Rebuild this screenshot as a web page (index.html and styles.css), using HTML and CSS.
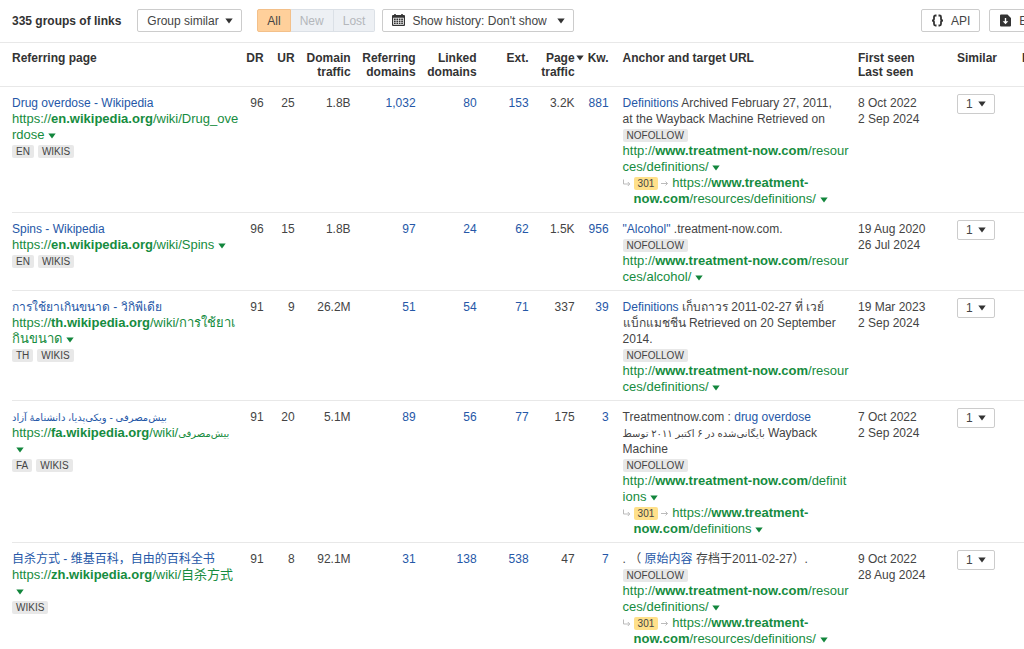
FILE: index.html
```html
<!DOCTYPE html>
<html lang="en">
<head>
<meta charset="utf-8">
<title>Backlinks</title>
<link rel="stylesheet" href="styles.css">
</head>
<body>
<svg class="sprite" aria-hidden="true">
  <symbol id="caret" viewBox="0 0 8 6"><path d="M0.3 0.5h7.4L4 5.5z" fill="currentColor"/></symbol>
  <symbol id="turn" viewBox="0 0 8 8"><path d="M0.5 0.5v4.5h6M4.8 3l2 2-2 2" fill="none" stroke="currentColor"/></symbol>
  <symbol id="arrow" viewBox="0 0 8 8"><path d="M0 4.5h6.5M4.5 2.5l2 2-2 2" fill="none" stroke="currentColor"/></symbol>
</svg>
<main class="page">
  <header class="toolbar">
    <h1 class="count">335 groups of links</h1>
    <div class="select group">
      <select aria-label="Grouping"><option>Group similar</option></select>
      <svg class="mark"><use href="#caret"/></svg>
    </div>
    <div class="segments" role="group" aria-label="Link status">
      <button class="segment active" type="button">All</button>
      <button class="segment" type="button" disabled>New</button>
      <button class="segment" type="button" disabled>Lost</button>
    </div>
    <div class="select history">
      <svg class="icon" viewBox="0 0 13 13"><path fill="currentColor" fill-rule="evenodd" d="M2.200 0h1.600v1h5.400V0h1.600v1H12a1 1 0 0 1 1 1v9a1 1 0 0 1-1 1H1a1 1 0 0 1-1-1V2a1 1 0 0 1 1-1h1.200zM1.200 3.800v7h10.600v-7z"/><path d="M2 5.300h9M2 7.300h9M2 9.300h9" stroke="currentColor" stroke-width="1.500" stroke-dasharray="1.700 .7"/></svg>
      <select aria-label="History"><option>Show history: Don't show</option></select>
      <svg class="mark"><use href="#caret"/></svg>
    </div>
    <div class="actions">
      <button class="button" type="button"><svg class="icon" viewBox="0 0 13 13"><path fill="none" stroke="currentColor" stroke-width="1.800" d="M5.500 1.500H4.500Q3 1.500 3 3V5Q3 6.500 1 6.500Q3 6.500 3 8v2Q3 11.500 4.500 11.500h1M7.500 1.500h1Q10 1.500 10 3V5Q10 6.500 12 6.500Q10 6.500 10 8v2Q10 11.500 8.500 11.500H7.500"/></svg>API</button>
      <button class="button" type="button"><svg class="icon" viewBox="0 0 13 13"><path fill="currentColor" fill-rule="evenodd" d="M2 .5h6.500L12 4v7.500a1 1 0 0 1-1 1H2a1 1 0 0 1-1-1v-10a1 1 0 0 1 1-1zM5.800 4v3.200H3.700l2.800 3 2.800-3H7.200V4z"/></svg>Export</button>
    </div>
  </header>

  <table class="links">
    <colgroup>
      <col class="col-page"><col class="col-dr"><col class="col-ur"><col class="col-traffic"><col class="col-ref"><col class="col-linked"><col class="col-ext"><col class="col-ptraffic"><col class="col-kw"><col class="col-anchor"><col class="col-seen"><col class="col-similar"><col class="col-inspect">
    </colgroup>
    <thead>
      <tr>
        <th class="first">Referring page</th>
        <th class="num">DR</th>
        <th class="num">UR</th>
        <th class="num">Domain traffic</th>
        <th class="num">Referring domains</th>
        <th class="num">Linked domains</th>
        <th class="num">Ext.</th>
        <th class="num sorted"><div class="sort"><span>Page traffic</span><svg class="mark"><use href="#caret"/></svg></div></th>
        <th class="num">Kw.</th>
        <th class="anchor">Anchor and target URL</th>
        <th>First seen<br>Last seen</th>
        <th>Similar</th>
        <th>Inspect</th>
      </tr>
    </thead>
    <tbody>
      <tr>
        <td class="first">
          <a class="title" href="#">Drug overdose - Wikipedia</a>
          <div class="url"><a href="#">https://<b>en.wikipedia.org</b>/wiki/Drug_ove<br>rdose</a>&nbsp;<button class="more" type="button" aria-label="URL menu"><svg class="mark"><use href="#caret"/></svg></button></div>
          <div class="tags"><span class="tag">EN</span><span class="tag">WIKIS</span></div>
        </td>
        <td class="num">96</td><td class="num">25</td><td class="num">1.8B</td>
        <td class="num"><a href="#">1,032</a></td><td class="num"><a href="#">80</a></td><td class="num"><a href="#">153</a></td>
        <td class="num ptraffic">3.2K</td><td class="num"><a href="#">881</a></td>
        <td class="anchor">
          <div><a href="#">Definitions</a> Archived February 27, 2011,<br>at the Wayback Machine Retrieved on</div>
          <div class="tags"><span class="tag">NOFOLLOW</span></div>
          <div class="url"><a href="#">http://<b>www.treatment-now.com</b>/resour<br>ces/definitions/</a>&nbsp;<button class="more" type="button" aria-label="URL menu"><svg class="mark"><use href="#caret"/></svg></button></div>
          <div class="url redirect"><svg class="hop lead"><use href="#turn"/></svg><span class="code">301</span><svg class="hop"><use href="#arrow"/></svg><a href="#">https://<b>www.treatment-<br>now.com</b>/resources/definitions/</a>&nbsp;<button class="more" type="button" aria-label="URL menu"><svg class="mark"><use href="#caret"/></svg></button></div>
        </td>
        <td>8 Oct 2022<br>2 Sep 2024</td>
        <td class="similar"><div class="select small"><select aria-label="Similar links"><option>1</option></select><svg class="mark"><use href="#caret"/></svg></div></td>
        <td></td>
      </tr>
      <tr>
        <td class="first">
          <a class="title" href="#">Spins - Wikipedia</a>
          <div class="url"><a href="#">https://<b>en.wikipedia.org</b>/wiki/Spins</a>&nbsp;<button class="more" type="button" aria-label="URL menu"><svg class="mark"><use href="#caret"/></svg></button></div>
          <div class="tags"><span class="tag">EN</span><span class="tag">WIKIS</span></div>
        </td>
        <td class="num">96</td><td class="num">15</td><td class="num">1.8B</td>
        <td class="num"><a href="#">97</a></td><td class="num"><a href="#">24</a></td><td class="num"><a href="#">62</a></td>
        <td class="num ptraffic">1.5K</td><td class="num"><a href="#">956</a></td>
        <td class="anchor">
          <div><a href="#">"Alcohol"</a> .treatment-now.com.</div>
          <div class="tags"><span class="tag">NOFOLLOW</span></div>
          <div class="url"><a href="#">http://<b>www.treatment-now.com</b>/resour<br>ces/alcohol/</a>&nbsp;<button class="more" type="button" aria-label="URL menu"><svg class="mark"><use href="#caret"/></svg></button></div>
        </td>
        <td>19 Aug 2020<br>26 Jul 2024</td>
        <td class="similar"><div class="select small"><select aria-label="Similar links"><option>1</option></select><svg class="mark"><use href="#caret"/></svg></div></td>
        <td></td>
      </tr>
      <tr>
        <td class="first">
          <a class="title" href="#" lang="th">การใช้ยาเกินขนาด - วิกิพีเดีย</a>
          <div class="url"><a href="#">https://<b>th.wikipedia.org</b>/wiki/การใช้ยาเ<br>กินขนาด</a>&nbsp;<button class="more" type="button" aria-label="URL menu"><svg class="mark"><use href="#caret"/></svg></button></div>
          <div class="tags"><span class="tag">TH</span><span class="tag">WIKIS</span></div>
        </td>
        <td class="num">91</td><td class="num">9</td><td class="num">26.2M</td>
        <td class="num"><a href="#">51</a></td><td class="num"><a href="#">54</a></td><td class="num"><a href="#">71</a></td>
        <td class="num ptraffic">337</td><td class="num"><a href="#">39</a></td>
        <td class="anchor">
          <div><a href="#">Definitions</a> เก็บถาวร 2011-02-27 ที่ เวย์<br>แบ็กแมชชีน Retrieved on 20 September 2014.</div>
          <div class="tags"><span class="tag">NOFOLLOW</span></div>
          <div class="url"><a href="#">http://<b>www.treatment-now.com</b>/resour<br>ces/definitions/</a>&nbsp;<button class="more" type="button" aria-label="URL menu"><svg class="mark"><use href="#caret"/></svg></button></div>
        </td>
        <td>19 Mar 2023<br>2 Sep 2024</td>
        <td class="similar"><div class="select small"><select aria-label="Similar links"><option>1</option></select><svg class="mark"><use href="#caret"/></svg></div></td>
        <td></td>
      </tr>
      <tr>
        <td class="first">
          <a class="title" href="#"><span class="persian" lang="fa">بیش‌مصرفی - ویکی‌پدیا، دانشنامهٔ آزاد</span></a>
          <div class="url"><a href="#">https://<b>fa.wikipedia.org</b>/wiki/<span class="persian" lang="fa">بیش‌مصرفی</span></a><br>&nbsp;<button class="more" type="button" aria-label="URL menu"><svg class="mark"><use href="#caret"/></svg></button></div>
          <div class="tags"><span class="tag">FA</span><span class="tag">WIKIS</span></div>
        </td>
        <td class="num">91</td><td class="num">20</td><td class="num">5.1M</td>
        <td class="num"><a href="#">89</a></td><td class="num"><a href="#">56</a></td><td class="num"><a href="#">77</a></td>
        <td class="num ptraffic">175</td><td class="num"><a href="#">3</a></td>
        <td class="anchor">
          <div>Treatmentnow.com : <a href="#">drug overdose</a><br><span class="persian" lang="fa">بایگانی‌شده در ۶ اکتبر ۲۰۱۱ توسط</span> Wayback<br>Machine</div>
          <div class="tags"><span class="tag">NOFOLLOW</span></div>
          <div class="url"><a href="#">http://<b>www.treatment-now.com</b>/definit<br>ions</a>&nbsp;<button class="more" type="button" aria-label="URL menu"><svg class="mark"><use href="#caret"/></svg></button></div>
          <div class="url redirect"><svg class="hop lead"><use href="#turn"/></svg><span class="code">301</span><svg class="hop"><use href="#arrow"/></svg><a href="#">https://<b>www.treatment-<br>now.com</b>/definitions</a>&nbsp;<button class="more" type="button" aria-label="URL menu"><svg class="mark"><use href="#caret"/></svg></button></div>
        </td>
        <td>7 Oct 2022<br>2 Sep 2024</td>
        <td class="similar"><div class="select small"><select aria-label="Similar links"><option>1</option></select><svg class="mark"><use href="#caret"/></svg></div></td>
        <td></td>
      </tr>
      <tr>
        <td class="first">
          <a class="title" href="#" lang="zh-CN">自杀方式 - 维基百科，自由的百科全书</a>
          <div class="url"><a href="#">https://<b>zh.wikipedia.org</b>/wiki/自杀方式</a><br>&nbsp;<button class="more" type="button" aria-label="URL menu"><svg class="mark"><use href="#caret"/></svg></button></div>
          <div class="tags"><span class="tag">WIKIS</span></div>
        </td>
        <td class="num">91</td><td class="num">8</td><td class="num">92.1M</td>
        <td class="num"><a href="#">31</a></td><td class="num"><a href="#">138</a></td><td class="num"><a href="#">538</a></td>
        <td class="num ptraffic">47</td><td class="num"><a href="#">7</a></td>
        <td class="anchor">
          <div lang="zh-CN">. （ <a href="#">原始内容</a> 存档于2011-02-27）.</div>
          <div class="tags"><span class="tag">NOFOLLOW</span></div>
          <div class="url"><a href="#">http://<b>www.treatment-now.com</b>/resour<br>ces/definitions/</a>&nbsp;<button class="more" type="button" aria-label="URL menu"><svg class="mark"><use href="#caret"/></svg></button></div>
          <div class="url redirect"><svg class="hop lead"><use href="#turn"/></svg><span class="code">301</span><svg class="hop"><use href="#arrow"/></svg><a href="#">https://<b>www.treatment-<br>now.com</b>/resources/definitions/</a>&nbsp;<button class="more" type="button" aria-label="URL menu"><svg class="mark"><use href="#caret"/></svg></button></div>
        </td>
        <td>9 Oct 2022<br>28 Aug 2024</td>
        <td class="similar"><div class="select small"><select aria-label="Similar links"><option>1</option></select><svg class="mark"><use href="#caret"/></svg></div></td>
        <td></td>
      </tr>
    </tbody>
  </table>
</main>
</body>
</html>
```
FILE: styles.css
```css
* { box-sizing: border-box; }

body {
  margin: 0;
  overflow: hidden;
  background: #fff;
  color: #444;
  font: 12px/16px "Liberation Sans", "Noto Sans CJK SC", "DejaVu Sans", sans-serif;
}

a { color: #2557a7; text-decoration: none; }
a:hover { text-decoration: underline; }
button, select { font: inherit; color: inherit; }

.sprite { display: none; }
.page { min-width: 1080px; }
.mark { width: 8px; height: 6px; }
.icon { width: 13px; height: 13px; flex: none; color: #333; }

/* Toolbar */
.toolbar {
  display: flex;
  align-items: center;
  padding: 9px 16px 10px 12px;
  border-bottom: 1px solid #e8e8e8;
}
.count { margin: 0 16px 0 0; font-size: 12px; line-height: 16px; color: #333; }

.select {
  display: grid;
  grid-template-columns: 1fr;
  align-items: center;
  border: 1px solid #ccc;
  border-radius: 2px;
  background: #fff;
  color: #444;
}
.select select {
  grid-area: 1 / 1;
  height: 21px;
  padding: 0 22px 0 9px;
  border: 0;
  background: transparent;
  appearance: none;
}
.select .mark {
  grid-area: 1 / 1;
  justify-self: end;
  margin-right: 8px;
  color: #333;
  pointer-events: none;
}
.group { margin-right: 15px; }
.history { padding-left: 9px; grid-template-columns: 13px 1fr; }
.history select, .history .mark { grid-column: 2; }
.history select { padding-left: 7px; padding-right: 26px; }

.segments { display: flex; margin-right: 7px; }
.segment {
  height: 23px;
  padding: 0 9px;
  border: 1px solid #dbe0e6;
  border-left-width: 0;
  background: #edf0f4;
  color: #b4b7bb;
}
.segment:last-child { border-radius: 0 2px 2px 0; }
.segment.active {
  border: 1px solid #f3c08a;
  border-radius: 2px 0 0 2px;
  background: #ffd09b;
  color: #444;
}

.actions { display: flex; gap: 9px; margin-left: auto; }
.button {
  display: flex;
  align-items: center;
  gap: 7px;
  height: 23px;
  padding: 0 9px;
  border: 1px solid #ccc;
  border-radius: 2px;
  background: #fff;
  color: #444;
}

/* Links table */
.links { width: 100%; table-layout: fixed; border-collapse: separate; border-spacing: 0; }
.col-page { width: 22%; }
.col-dr { width: 26px; }
.col-ur { width: 31px; }
.col-traffic { width: 56px; }
.col-ref { width: 65px; }
.col-linked { width: 61px; }
.col-ext { width: 52px; }
.col-ptraffic { width: 57px; }
.col-kw { width: 23px; }
.col-seen { width: 99px; }
.col-similar { width: 65px; }
.col-inspect { width: 58px; }

th {
  padding: 8px 0 7px;
  border-bottom: 1px solid #e8e8e8;
  color: #333;
  line-height: 14px;
  text-align: left;
  vertical-align: top;
}
td { padding: 8px 0 6px; vertical-align: top; }
tbody tr { background: linear-gradient(#e8e8e8, #e8e8e8) no-repeat 12px 100% / 100% 1px; }
.first { padding-left: 12px; }
.num { text-align: right; }
.anchor { padding-left: 14px; padding-right: 12px; }
.ptraffic { padding-right: 11px; }
.sorted { padding-right: 2px; }
.sort { display: flex; justify-content: flex-end; gap: 1px; }
.sort .mark { flex: none; margin-top: 4px; }

.title { display: block; white-space: nowrap; }
.persian { font-size: 10px; line-height: 12px; }
.url { font-size: 13px; white-space: nowrap; }
.url, .url a { color: #168c40; }
.more { padding: 0; border: 0; background: none; line-height: 6px; color: #12863c; }
.more .mark { display: block; }

.tags { display: flex; align-items: center; gap: 4px; height: 16px; }
.tag, .code {
  padding: 0 4px;
  border-radius: 2px;
  background: #e8e8e8;
  font-size: 10px;
  line-height: 13px;
}
.redirect { padding-left: 11px; text-indent: -11px; }
.redirect .code { display: inline-block; margin-right: 3px; background: #ffe08a; color: #444; text-indent: 0; }
.redirect .more { text-indent: 0; }
.hop { width: 8px; height: 8px; margin-right: 3px; color: #bbb; }

.similar { padding-top: 7px; }
.small { width: 38px; }
.small select { height: 18px; padding: 0 18px 0 8px; }
```
